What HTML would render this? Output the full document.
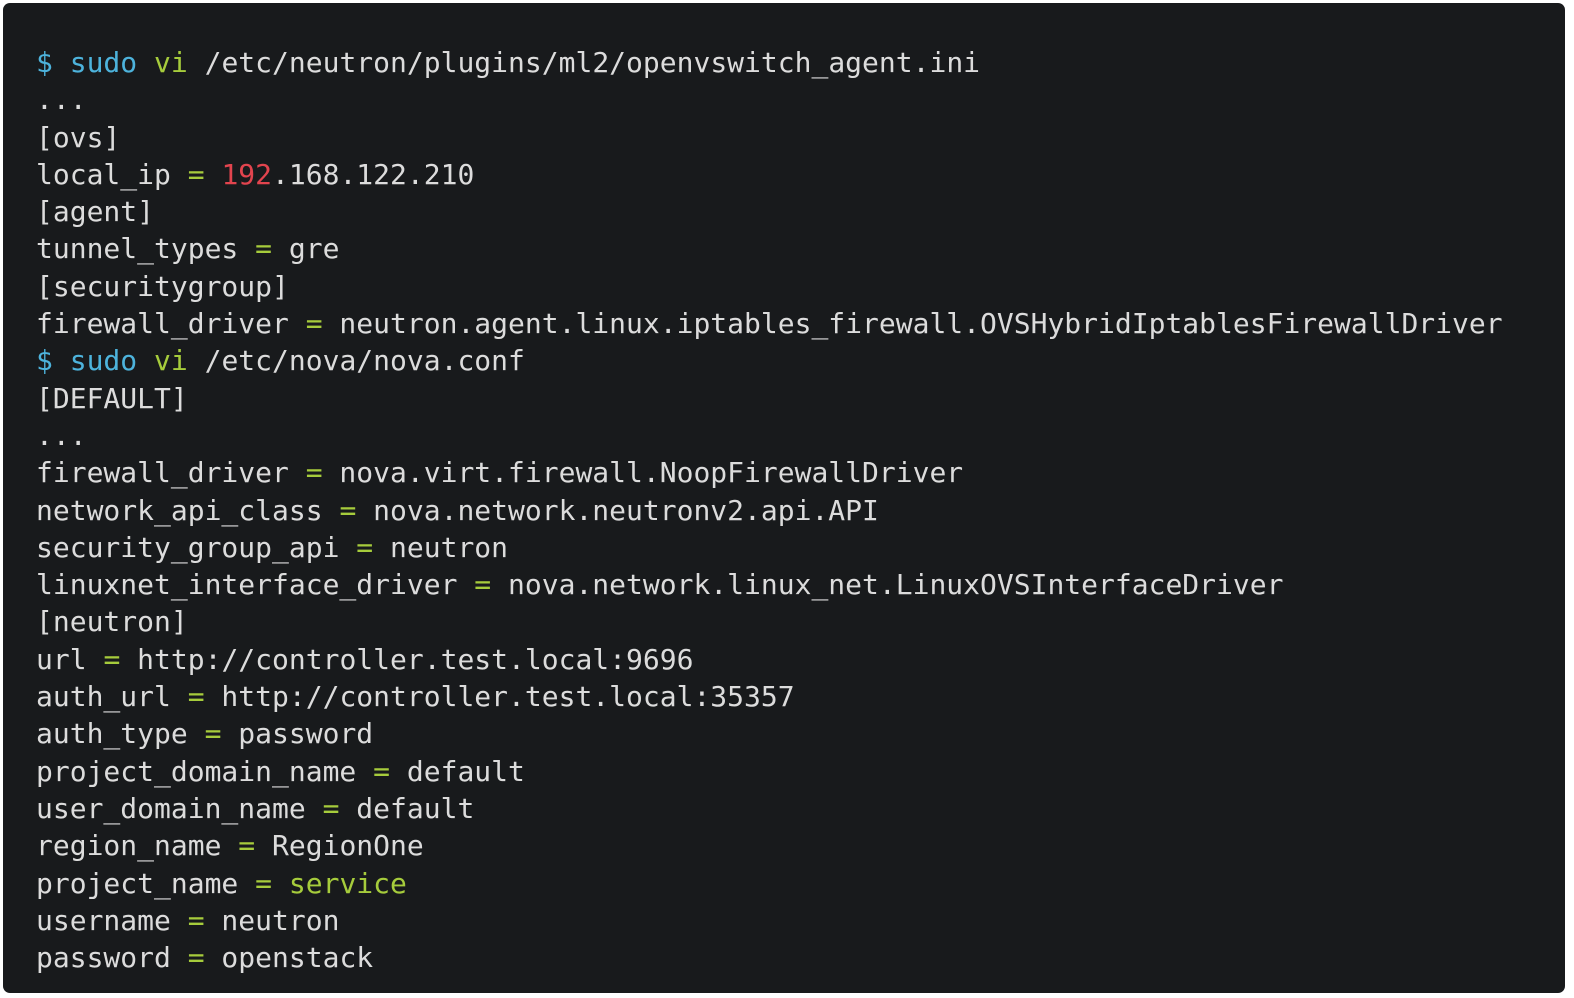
<!DOCTYPE html>
<html><head><meta charset="utf-8"><style>
html,body{margin:0;padding:0;background:#fff;width:1574px;height:998px;overflow:hidden}
.box{position:absolute;left:3px;top:3px;width:1562px;height:990px;background:#181a1c;border-radius:7px}
pre{margin:0;position:absolute;left:33px;top:41px;font-family:"DejaVu Sans Mono","Liberation Mono",monospace;font-size:28px;line-height:37.3px;color:#dcdcdc}
.b{color:#4db3dc}.g{color:#a6cc3c}.r{color:#e2444e}
</style></head><body><div class="box"><pre><span class="b">$ sudo</span> <span class="g">vi</span> /etc/neutron/plugins/ml2/openvswitch_agent.ini
...
[ovs]
local_ip <span class="g">=</span> <span class="r">192</span>.168.122.210
[agent]
tunnel_types <span class="g">=</span> gre
[securitygroup]
firewall_driver <span class="g">=</span> neutron.agent.linux.iptables_firewall.OVSHybridIptablesFirewallDriver
<span class="b">$ sudo</span> <span class="g">vi</span> /etc/nova/nova.conf
[DEFAULT]
...
firewall_driver <span class="g">=</span> nova.virt.firewall.NoopFirewallDriver
network_api_class <span class="g">=</span> nova.network.neutronv2.api.API
security_group_api <span class="g">=</span> neutron
linuxnet_interface_driver <span class="g">=</span> nova.network.linux_net.LinuxOVSInterfaceDriver
[neutron]
url <span class="g">=</span> http://controller.test.local:9696
auth_url <span class="g">=</span> http://controller.test.local:35357
auth_type <span class="g">=</span> password
project_domain_name <span class="g">=</span> default
user_domain_name <span class="g">=</span> default
region_name <span class="g">=</span> RegionOne
project_name <span class="g">= service</span>
username <span class="g">=</span> neutron
password <span class="g">=</span> openstack</pre></div></body></html>
